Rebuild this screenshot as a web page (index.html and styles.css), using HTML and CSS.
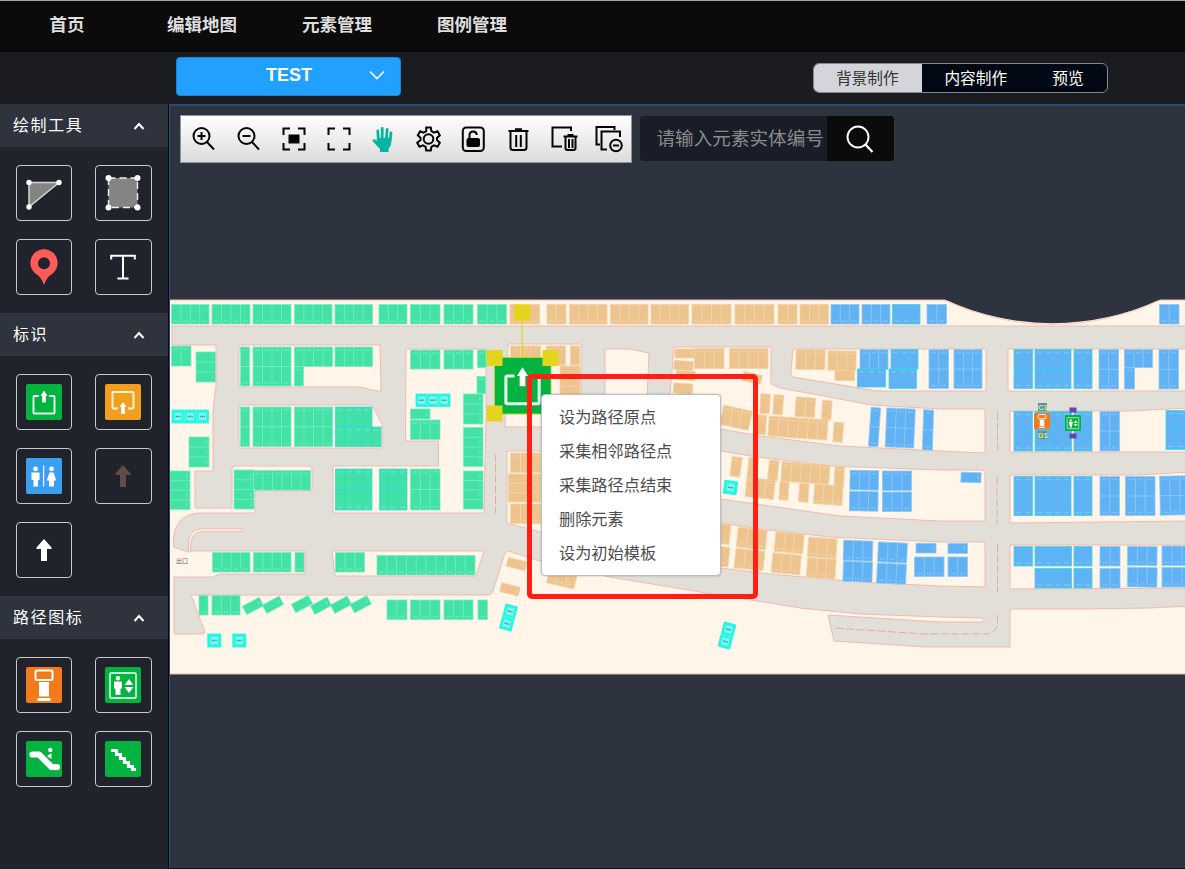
FILE: index.html
```html
<!DOCTYPE html>
<html lang="zh-CN">
<head>
<meta charset="utf-8">
<title>背景制作</title>
<link rel="stylesheet" href="styles.css">
</head>
<body>
<svg class="defs" width="0" height="0" aria-hidden="true">
  <defs>
    <symbol id="up" viewBox="0 0 12 8"><path d="M1.500 7 6 2l4.500 5" fill="none" stroke="#fff" stroke-width="2"/></symbol>
    <symbol id="exit" viewBox="0 0 36 36">
      <path d="M13 12H8.500a1 1 0 0 0-1 1v15.500a1 1 0 0 0 1 1h19a1 1 0 0 0 1-1V13a1 1 0 0 0-1-1H23" fill="none" stroke="#e9fff0" stroke-width="1.900"/>
      <path d="M18 6.500 21.500 12h-1.700v6.500h-3.600V12h-1.700z" fill="#fff"/>
    </symbol>
    <symbol id="arrow" viewBox="0 0 16 22"><path d="M8 0 15.500 8.500V10H11v12H5V10H.5V8.500z" fill="currentColor"/></symbol>
    <symbol id="kiosk" viewBox="0 0 36 36">
      <rect width="36" height="36" rx="2" fill="#f27a1a"/>
      <rect x="9.500" y="3.500" width="17" height="9.500" rx="1.500" fill="none" stroke="#fff" stroke-width="2"/>
      <path d="M13 15h10v14.500H13zM11.500 31h13v3h-13z" fill="#fff"/>
    </symbol>
    <symbol id="lift" viewBox="0 0 36 36">
      <rect width="36" height="36" rx="2" fill="#02b340"/>
      <rect x="5" y="6" width="26" height="25" rx="1" fill="none" stroke="#fff" stroke-width="1.400"/>
      <circle cx="13" cy="11.300" r="2.200" fill="#fff"/>
      <path d="M9 14.500h8v7h-1.500V28h-5v-6.500H9zM24 12l4.500 6h-9zM24 26l4.500-6h-9z" fill="#fff"/>
    </symbol>
  </defs>
</svg>

<header class="topnav">
  <a class="nav-home">首页</a><a>编辑地图</a><a>元素管理</a><a>图例管理</a>
</header>

<div class="subbar">
  <button class="project">TEST<svg class="chev" viewBox="0 0 16 10"><path d="m1 1.500 7 7 7-7" fill="none" stroke="#fff" stroke-width="1.600"/></svg></button>
  <div class="segment"><span class="seg on">背景制作</span><span class="seg">内容制作</span><span class="seg last">预览</span></div>
</div>

<div class="workspace">
  <aside class="sidebar">
    <div class="head"><span>绘制工具</span><svg class="caret"><use href="#up"/></svg></div>
    <div class="tiles">
      <div class="tile"><svg width="36" height="36" viewBox="0 0 36 36"><path d="M3 7.500h30L3 32z" fill="#848484" stroke="#d8d8d8" stroke-width="1.500"/><g fill="#fff"><circle cx="3" cy="7.500" r="2.700"/><circle cx="33" cy="7.500" r="2.700"/><circle cx="3" cy="32" r="2.700"/></g></svg></div>
      <div class="tile"><svg width="36" height="36" viewBox="0 0 36 36"><path d="M3.500 3h29v29.500h-29z" fill="#848484" stroke="#eee" stroke-width="1.400" stroke-dasharray="7 4"/><g fill="#fff"><circle cx="3.500" cy="3" r="3"/><circle cx="32.500" cy="3" r="3"/><circle cx="3.500" cy="32.500" r="3"/><circle cx="32.500" cy="32.500" r="3"/></g></svg></div>
      <div class="tile"><svg width="28" height="36" viewBox="0 0 28 36"><path fill-rule="evenodd" d="M14 0a14 14 0 0 1 5.500 26.700C17.500 28 15.500 32 14 36c-1.500-4-3.500-8-5.500-9.300A14 14 0 0 1 14 0zm0 8.300a6 6 0 1 0 0 12 6 6 0 0 0 0-12z" fill="#ff5b5b"/></svg></div>
      <div class="tile"><svg width="26" height="26" viewBox="0 0 26 26"><path d="M1.200 5.500V1.700h23.600v3.800M13 1.700V24M7.500 24.500h11" fill="none" stroke="#fff" stroke-width="2"/></svg></div>
    </div>
    <div class="head"><span>标识</span><svg class="caret"><use href="#up"/></svg></div>
    <div class="tiles">
      <div class="tile"><svg class="sign" viewBox="0 0 36 36"><rect width="36" height="36" rx="2" fill="#02b340"/><use href="#exit"/></svg></div>
      <div class="tile"><svg class="sign" viewBox="0 0 36 36"><rect width="36" height="36" rx="2" fill="#f0a01e"/><path d="M13 24.500H8.500a1 1 0 0 1-1-1V9a1 1 0 0 1 1-1h19a1 1 0 0 1 1 1v14.500a1 1 0 0 1-1 1H23" fill="none" stroke="#fff3dc" stroke-width="1.900"/><path d="m18 18 3.500 5h-1.700v7h-3.600v-7h-1.700z" fill="#fff"/></svg></div>
      <div class="tile"><svg class="sign" viewBox="0 0 36 36"><rect width="36" height="36" rx="2" fill="#3a9ff0"/><g fill="#fff"><circle cx="9.500" cy="10.800" r="2.400"/><path d="M5.500 14.500h8v7.500h-1.500v6.500H7.500V22h-2z"/><path d="M17 7.500h1.200v21H17z"/><circle cx="25.500" cy="10.800" r="2.400"/><path d="M23.500 14.500h4l2.800 8H28v6h-5v-6h-2.300z"/></g></svg></div>
      <div class="tile dim"><svg width="16" height="22"><use href="#arrow"/></svg></div>
      <div class="tile lit"><svg width="16" height="22"><use href="#arrow"/></svg></div>
    </div>
    <div class="head"><span>路径图标</span><svg class="caret"><use href="#up"/></svg></div>
    <div class="tiles">
      <div class="tile"><svg class="sign"><use href="#kiosk"/></svg></div>
      <div class="tile"><svg class="sign"><use href="#lift"/></svg></div>
      <div class="tile"><svg class="sign" viewBox="0 0 36 36"><rect width="36" height="36" rx="2" fill="#02b340"/><path d="M6.500 13.500H13L25.500 26H31" fill="none" stroke="#fff" stroke-width="6.200" stroke-linecap="round" stroke-linejoin="round"/><circle cx="24.300" cy="9" r="2.200" fill="#fff"/><path d="M22 14 25.500 12.500v5.500L21.500 15.500z" fill="#fff"/></svg></div>
      <div class="tile"><svg class="sign" viewBox="0 0 36 36"><rect width="36" height="36" rx="2" fill="#02b340"/><path d="M6 9.500h5.500v4h4v4h4v4h4v4h4v3H31" fill="none" stroke="#fff" stroke-width="3.200"/></svg></div>
    </div>
  </aside>

  <main class="canvas">
    <svg class="map" viewBox="170 106 1015 762">
      <rect x="169.500" y="300" width="1018" height="374" fill="#fff6e9" stroke="#f6b9ae"/>
      <path class="road" d="M171.500 326H1190V606L1150 608 1080 609H1012Q1010 609 1010 612V647H925L834 641 828 615 940 622H983Q985 620 983 618L940 617 860 614 800 608 770 603 700 592 610 577 540 561 508 551Q505 552 504 556L493 591Q492 595 488 595H191L205 632Q205 634 202 634H174V577H213L220 574H305V551H192L188.500 552 173.500 547V540Q175 514 200 513H255V490.500H312V468L309 466H235Q232 466 232 469V508H195V471H213V411L216 385V345H172V328Z"/>
      <path class="island" d="M188.500 552V541Q190 529 202 529H243V531.500H202Q191 532 190.500 545V552"/>
      <path class="island" d="M239 345H380L381 391H377L360 387H239ZM239 405H372L382 424V448H239ZM406 349H486V415L484 513H333V466H438.500V441H408Q405.500 441 405.500 438ZM332 551H484L476 576H335ZM508 344H581V427H505ZM605 430V349H630L649 353 647 400V430ZM507 451H640V560L541 532 507 523ZM674 347H771V384L780 388 872 405 940 409H985V453L940 451 840 446 760 436 721 429H670V395ZM793 349H986V391H877L793 377Q790 375 791 372ZM650 451H721L757 457 830 466 940 470H982Q985 471 985 474V521H940L840 516 721 499H650ZM660 523H721L760 529 830 537 940 542H983Q985 542 985 545V587L940 586 860 582 770 574 721 568H660ZM1008 349H1190V391H1008ZM1010 411H1130L1190 408V452H1010ZM1010 475H1140L1190 472V521L1010 523ZM1010 545H1190V588L1010 589Z"/>
      <path class="dash" d="M495.500 454v60M997.500 412v38M997 477v47M997.500 544v48M997.500 615v8Q996 634 985 634H925L833 628"/>
      <g id="lots"></g>
      <path d="M944 299A255 255 0 0 0 1161 299Z" fill="#2d333f"/>
      <path d="M944 300A255 255 0 0 0 1161 300" fill="none" stroke="#f6b9ae" stroke-width=".8"/>
      <text class="gate" x="176" y="563">出口</text>
      <use href="#kiosk" x="1034" y="413" width="16" height="16"/>
      <use href="#lift" x="1065" y="415" width="16" height="16"/>
      <path d="M1038 403h9v8h-9zM1038 431h9v8h-9z" fill="#5b8fc4"/>
      <text class="tag" x="1038" y="409.500">C1</text>
      <text class="tag" x="1038" y="437.500">D1</text>
      <path d="M1069.500 407.500h7v5h-7zM1069.500 433.500h7v5h-7z" fill="#6a42b4"/>
      <rect x="494.500" y="357.500" width="56.500" height="56.500" fill="#02b340" stroke="#b4d622"/>
      <use href="#exit" x="494" y="357" width="57" height="57"/>
      <g fill="#e3d51d"><path d="M521.500 320h1.200v37h-1.200zM514 304.500h16v16h-16zM486.500 350h16v16h-16zM542.500 350h16v16h-16zM486.500 405.500h16v16h-16z"/></g>
    </svg>

    <div class="tools">
      <div class="toolbar">
        <svg class="ic" viewBox="0 0 26 26"><circle cx="10.500" cy="10" r="8"/><path d="m16 16 7 7.500M6.500 10h8M10.500 6v8"/></svg>
        <svg class="ic" viewBox="0 0 26 26"><circle cx="10.500" cy="10" r="8"/><path d="m16 16 7 7.500M6.500 10h8"/></svg>
        <svg class="ic" viewBox="0 0 26 26"><path d="M2.500 9V2.500H9M17 2.500h6.500V9M23.500 17v6.500H17M9 23.500H2.500V17"/><path class="solid" d="M8.500 9.500h9v7h-9z"/></svg>
        <svg class="ic" viewBox="0 0 26 26"><path d="M2.500 9V2.500H9M17 2.500h6.500V9M23.500 17v6.500H17M9 23.500H2.500V17"/></svg>
        <svg class="ic hand" viewBox="0 0 26 26"><path d="M7.500 15 6.800 5M11.200 13V2.300M15.500 13l.6-9.500M19 15l1-8M8 20 3 14.500"/><path class="fill" d="M6 12h14.500l-.5 7-2.500 4v3H9v-3l-4-5.500z"/></svg>
        <svg class="ic" viewBox="0 0 26 26"><circle cx="12.500" cy="13" r="4.800"/><path d="M10.200 1.500h4.600l.6 3.600 2.600 1.500 3.500-1.300 2.300 4L21 12v2l2.800 2.700-2.300 4-3.500-1.300-2.600 1.500-.6 3.600h-4.600l-.6-3.600-2.600-1.500-3.500 1.300-2.300-4L4.600 14v-2L1.800 9.300l2.300-4 3.500 1.300 2.600-1.500z"/></svg>
        <svg class="ic" viewBox="0 0 26 26"><rect x="1.800" y="1.500" width="21" height="23.500" rx="3.500"/><rect class="fill" x="5.500" y="12" width="13.500" height="9" rx="2"/><path d="M8.500 13V9q0-3.500 3.700-3.500 3.300 0 3.600 3.500"/></svg>
        <svg class="ic" viewBox="0 0 26 26"><path d="M2.500 5h20M9 3.300h7M4.500 6v15.500Q4.500 24 7 24h11q2.500 0 2.500-2.500V6M10.200 9v12M14.800 9v12"/></svg>
        <svg class="ic" viewBox="0 0 26 26"><path d="M11 20.500H1.500V1.500H20V5M12.500 10.500h14M16.500 9h6M14.500 11v11q0 2 2 2h6q2 0 2-2V11M18 13v9M21.500 13v9"/></svg>
        <svg class="ic" viewBox="0 0 26 26"><path d="M4 18.500H.5V1H18.500V4M11 23.500H5.500V5.500H24V11"/><circle cx="20" cy="19.500" r="5.800"/><path d="M17 19.500h6"/></svg>
      </div>
      <div class="search">
        <div class="field">请输入元素实体编号</div>
        <div class="go"><svg width="28" height="28" viewBox="0 0 28 28"><circle cx="12" cy="12" r="10.500" fill="none" stroke="#fff" stroke-width="1.900"/><path d="m19.500 19.500 7 7.500" stroke="#fff" stroke-width="2.200"/></svg></div>
      </div>
    </div>

    <div class="focus-box"></div>
    <ul class="menu">
      <li>设为路径原点</li><li>采集相邻路径点</li><li>采集路径点结束</li><li>删除元素</li><li>设为初始模板</li>
    </ul>
  </main>
</div>
<script src="lots.js"></script>
</body>
</html>
```

FILE: lots.js
```js
// Each lot block: x y width height columns rows rotation
const blocks = {
  green: `171.5 304.5 37.5 19.5 4;212 304.5 38 19.5 4;253 304.5 38 19.5 4;294.5 304.5 37.5 19.5 4;335 304.5 37.5 19.5 4;379 304.5 28 19.5 3;410.5 304.5 29.5 19.5 3;444 304.5 29 19.5 3;477.5 304.5 29 19.5 3
171.5 346 19.5 20 2;196 352 19.5 30 1 3;240.5 347 9 39 1 2;253 347 38 39 4 2;294.5 347 38 19.5 4;294.5 366.5 9 19.5;335 347 37.5 19.5 4
240.5 407 9 39.5 1 2;253 407 38 39.5 4 2;294.5 407 38 39.5 4 2;189 437 20 30 1 3;170 471 20 38.5 1 4;234 470 20 39 1 4;253.5 470.5 57 19.5 6
410.5 469 29.5 41 3 2;463.5 394 19.5 30 1 3;463.5 427.5 19.5 39 1 4;463.5 471 19.5 38 1 4
410.5 350 29.5 19 3;444 350 29 19 3;477.5 350 8.500 17.5;477 376.5 8.500 17;410.5 409 19.5 10;410.5 420 29.5 19.5 3
212.5 552.5 37.5 19.5 4;253.5 552.5 37.5 19.5 4;295 552.5 9 19.5;335.5 552.5 29 19.5 3;377 555.5 98 19.5 10
199 595.5 9 19.5;212 595.5 28 19.5 3;387 600 20 19.5 2;410.5 600 29.5 19.5 3;444 600 29 19.5 3;478 600 9.500 19.5
243.5 601.2 19 9.500 1 1 -28;263.5 600 19 9.500 1 1 -28;292.5 599.3 19 9.500 1 1 -28;311.5 601 19 9.500 1 1 -28;331.5 600 19 9.500 1 1 -28;351.2 599.5 19 9.500 1 1 -28`,
  "green teal": `335.5 407 36.5 20 4;335.5 427 45.5 19.5 5;335.5 469 36.5 41 4 2;379.5 469 27.5 41 3 2`,
  orange: `510 304.5 29.5 19.5 3;547 304.5 19 19.5 2;569.5 304.5 37.5 19.5 4;610.5 304.5 37.5 19.5 4;651 304.5 37.5 19.5 4;692 304.5 39 19.5 4;735 304.5 39 19.5 4;778 304.5 19 19.5 2;800 304.5 28.5 19.5 3
510.5 346 30 19 3;546.5 346 19 19 2;570.5 346 9 19;560 366 20 30 1 3;510.5 453 30 19.5 3;508.5 474 32 28 1 3;510.5 504 30 19.5 3
507 559.5 19 9 1 1 14;500.500 585 19 9 1 1 14;548 570 28 16 3 1 13
675 349 19.5 9;674 361 19 9 1 1 4;676 371 19 9 1 1 4;673.5 383.5 19 10 1 1 4;694.5 348.5 29.5 20 3;729.5 348.5 38.5 20 4;742.5 373.5 19 9 1 1 12;796 349.5 29 20 3 1 1;828 351 28 19.5 3 1 1;835 370.5 19.5 10
721.5 408 29 19.5 3 1 12;760.3 394 9.500 19.5 1 1 4;773.5 395 9.500 19.5 1 1 4;795.5 397.5 19.5 19.5 2 1 4;822 400.5 9.500 19.5 1 1 4;757 415 9 19.5 1 1 4;768.5 418 59 20 6 1 4;833.5 422.5 9.500 19.5 1 1 4
731 457 10 19.5 1 1 7;748 458 9.500 20 1 1 6;746 479 28.5 19 3 1 6;768.5 460.5 9.500 20 1 1 6;781.5 463.3 48 19.5 5 1 4;834.5 466.5 9.500 20 1 1 3;779.5 481.5 9 18.5 1 1 4;799 483.5 9.500 18.5 1 1 4;814 485 28.5 19.5 3 1 4
720 524.5 10 19.5 1 1 6;719 547 10 19.5 1 1 6;737.3 528.8 29 19.5 3 1 6;735 549.8 29 19.5 3 1 6;775 533 28.5 19.5 3 1 5;772 554 28.5 19.5 3 1 5;808 538 28.5 19.5 3 1 4;807 558.5 28.5 19.5 3 1 4`,
  blue: `831 304.5 28 19.5 3;862 304.5 28 19.5 3;927 304.5 19.5 19.5 2;1159.5 304.5 19.5 19.5 2
860 349.5 28 20 3;929 349.5 19.5 39 2 2;954 349.5 28 39 3 2;1099 349.5 19.5 39.5 2 2;1124.5 349.5 28 18 3;1124.5 367.5 10 21.5;1159 349.5 19.5 39.5 2 2
869.8 407.5 9.500 39 1 2 4;886 408.5 28.5 39 3 2 2.500;923 410 10 40 1 2 2;1100 411.5 19.5 39.5 2 2
850 470.5 28.5 19.5 3 1 1;849.5 491.5 28.5 19.5 3 1 1;882.5 471 29 19.5 3;882.5 492 29 19.5 3;961 472.5 20 10 1 1 2
843.5 540.7 29 20 3 1 2;843.2 561.7 29 20 3 1 2;878 542.5 29 20 3 1 2.500;877 563.7 29 20 3 1 2.500;916 543.3 20 9.700;914.5 557 29.5 19.5 3;948 557 19.5 19.5 2;948 543.5 19.5 10
1100 476.5 19.5 39 2 2;1125.5 476.5 29.5 39 3 2;1160 476 30 39 3 2 -1;1100 546.5 20 19.5 2;1100 568.5 20 19.5 2;1127.5 546.5 29.5 19 3 1 1;1127.5 567.5 29.5 19.5 3 1 1;1162 546 30 19.5 3;1162 567.5 30 19.5 3`,
  "blue teal": `892.5 304.5 27.5 19.5 3;891 349.5 27 19.5 3;857.5 369 28 18 3;889 369 27.5 19.5 3
1014 349.5 18.5 39 2 2;1035 349.5 36 39 4 2;1074 349.5 18 39 2 2;1014 411.5 18.5 39.5 2 2;1035 411.5 36.5 39.5 4 2;1074 411.5 18 39.5 2 2;1166 410.5 20 39 2 2
1014 476.5 18.5 39 2 2;1035 476.5 36 39 4 2;1074 476.5 18 39 2 2;1014 546.5 18.5 19.5 2;1035 546.5 36.5 19.5 4;1074 546.5 18 19.5 2;1035 568.5 36.5 19.5 4;1074 568.5 18 19.5 2`,
  cyan: `172 410 36.5 13 3;416 394 34 12.5 3;207.800 634 13 13;232.800 634 13 13;724 481 13 13 1 1 8;502.500 605 12 25 1 2 15;721 623 12 25 1 2 15`
};
const NS = "http://www.w3.org/2000/svg";
const layer = document.getElementById("lots");

function add(parent, name, attrs) {
  const el = document.createElementNS(NS, name);
  for (const key in attrs) el.setAttribute(key, attrs[key]);
  parent.appendChild(el);
  return el;
}

for (const kind in blocks) {
  for (const row of blocks[kind].split(/[;\n]/)) {
    const [x, y, w, h, cols = 1, rows = 1, angle = 0] = row.trim().split(" ").map(Number);
    const group = add(layer, "g", {
      class: "lot " + kind,
      transform: `rotate(${angle} ${x + w / 2} ${y + h / 2})`
    });
    add(group, "rect", { x, y, width: w, height: h });
    const cw = w / cols, ch = h / rows;
    let lines = "", marks = "";
    for (let c = 1; c < cols; c++) lines += `M${x + c * cw} ${y}v${h}`;
    for (let r = 1; r < rows; r++) lines += `M${x} ${y + r * ch}h${w}`;
    for (let c = 0; c < cols; c++) {
      for (let r = 0; r < rows; r++) {
        const mx = x + (c + 0.5) * cw, my = y + (r + 0.5) * ch;
        if (kind === "cyan") {
          add(group, "rect", { class: "pad", x: mx - 3.7, y: my - 3.7, width: 7.4, height: 7.4 });
          marks += `M${mx - 2.5} ${my}h5`;
        } else if (cw > ch) {
          marks += `M${x + w - 3} ${my - 2}v4`;
        } else {
          const top = rows === 2 ? r === 0 : y > 326 && y < 480;
          marks += `M${mx - 2.5} ${top ? y + 3 : y + h - 3}h5`;
        }
      }
    }
    add(group, "path", { class: "grid", d: lines });
    add(group, "path", { class: "mark", d: marks });
  }
}
```

FILE: styles.css
```css
* { box-sizing: border-box; }
body {
  margin: 0;
  width: 1185px;
  height: 869px;
  overflow: hidden;
  display: flex;
  flex-direction: column;
  background: #20232b;
  font-family: "Liberation Sans", "Noto Sans CJK SC", sans-serif;
}
.defs { position: absolute; }

.topnav {
  height: 52px;
  flex: none;
  display: flex;
  gap: 65px;
  align-items: center;
  padding: 0 0 5px 49.500px;
  background: #0b0b0b;
  border-top: 1px solid #a5a9a9;
  border-bottom: 1px solid #050505;
  color: #dedede;
  font-size: 17.5px;
  font-weight: 700;
}
.nav-home { margin-right: 17.500px; }

.subbar {
  height: 52px;
  flex: none;
  display: flex;
  align-items: flex-start;
  justify-content: space-between;
  padding: 4.500px 77.500px 0 176px;
  background: #1b1c1f;
}
.project {
  width: 225px;
  height: 39.500px;
  border: 1px solid #1c85d8;
  border-radius: 4px;
  background: #22a0ff;
  color: #fff;
  font: 700 18px "Liberation Sans", sans-serif;
  font-kerning: none;
  display: flex;
  align-items: center;
  justify-content: flex-end;
  gap: 57px;
  padding: 0 15px 2px 0;
}
.chev { width: 16px; height: 10px; }
.segment {
  display: flex;
  width: 295px;
  height: 30px;
  margin-top: 6.500px;
  border: 1px solid #85878a;
  border-radius: 6px;
  overflow: hidden;
  background: #020914;
  color: #fff;
  font-size: 15.700px;
}
.seg { width: 108.500px; padding: 0 1px 2px 0; display: flex; align-items: center; justify-content: center; }
.seg.on { background: #d4d5da; color: #333; }
.seg.last { flex: 1; }

.workspace { flex: 1; display: flex; min-height: 0; }
.sidebar { width: 169px; flex: none; border-right: 1px solid #08090c; }
.head {
  height: 43px;
  display: flex;
  align-items: center;
  justify-content: space-between;
  padding: 0 23px 0 13px;
  background: #2f333e;
  color: #fff;
  font-size: 16px;
  letter-spacing: 1.600px;
}
.head span { padding-bottom: 3px; }
.caret { width: 12px; height: 8px; }
.tiles {
  display: grid;
  grid-template-columns: 56px 57px;
  grid-auto-rows: 56px;
  gap: 18px 23px;
  padding: 18px 16px;
}
.tile {
  border: 1px solid #c9cacc;
  border-radius: 4px;
  display: flex;
  align-items: center;
  justify-content: center;
}
.tile:nth-child(even) { padding-right: 1px; }
.sign { width: 36px; height: 36px; }
.dim { color: #614c49; }
.lit { color: #fff; }

.canvas {
  position: relative;
  flex: 1;
  background: #2d333f;
  border-top: 2px solid #31486f;
  border-left: 1px solid #31486f;
  border-bottom: 1px solid #0d0e12;
}
.map { position: absolute; left: 0; top: 0; width: 1015px; height: 762px; }
.road { fill: #e1dfd8; stroke: #f0bab1; stroke-width: 1; }
.island { fill: #fff6e9; stroke: #f0bab1; stroke-width: 1; stroke-linejoin: round; }
.dash { fill: none; stroke: #e8a9a3; stroke-width: 1; stroke-dasharray: 8 2.500; }
.lot rect { stroke-width: .8; }
.grid { fill: none; stroke: #fff; stroke-opacity: .32; stroke-width: .8; }
.mark { fill: none; stroke: #fff; stroke-opacity: .22; stroke-width: 1.500; stroke-dasharray: 1.600 .4; }
.green rect { fill: #42e2a7; stroke: #7beebf; }
.orange rect { fill: #eec48e; stroke: #f3d2a6; }
.blue rect { fill: #61b2f4; stroke: #8cc9f8; }
.lot.teal rect { stroke: #35dbe6; }
.teal .grid { stroke: #26d5ec; stroke-opacity: .65; }
.cyan rect { fill: #22f8df; stroke: #22f8df; }
.lot.cyan .pad { fill: #80f6f0; stroke: none; }
.cyan .mark { stroke: #248b96; stroke-opacity: .8; }
.gate { font-size: 6px; fill: #666; }
.tag { font-size: 7.500px; font-weight: 700; fill: #e7ef31; }

.tools { position: relative; display: flex; gap: 8px; padding: 9px 0 0 10px; }
.toolbar {
  width: 452px;
  height: 48px;
  display: flex;
  align-items: center;
  border: 1px solid #91949b;
  background: linear-gradient(#fefefe, #dcdcdc);
}
.ic {
  width: 26px;
  height: 26px;
  margin: 0 9.500px;
  overflow: visible;
  fill: none;
  stroke: #050505;
  stroke-width: 2;
}
.solid { fill: #000; }
.fill { fill: #000; stroke: none; }
.hand { stroke: #05b69e; stroke-width: 2.800; stroke-linecap: round; }
.hand .fill { fill: #05b69e; }
.search { display: flex; width: 254px; height: 45px; margin-top: 1px; border-radius: 4px; overflow: hidden; }
.field {
  width: 187px;
  padding-left: 16.500px;
  background: #191d27;
  color: #8b8b8b;
  font-size: 18.600px;
  line-height: 45px;
  white-space: nowrap;
}
.go { flex: 1; padding: 1px 1px 0 0; background: #0b0b0b; display: flex; align-items: center; justify-content: center; }

.focus-box {
  position: absolute;
  left: 357px;
  top: 268px;
  width: 231px;
  height: 225px;
  border: 5px solid #ff2013;
  border-radius: 5px;
}
.menu {
  position: absolute;
  left: 371px;
  top: 288px;
  width: 180px;
  height: 182px;
  margin: 0;
  padding: 5px 0 0 17px;
  list-style: none;
  border: 1px solid #bfbfbf;
  border-radius: 4px;
  background: #fff;
  box-shadow: 0 0 2px rgba(0, 0, 0, .3);
  color: #4c4c4c;
  font-size: 16.200px;
  line-height: 34px;
}
```
